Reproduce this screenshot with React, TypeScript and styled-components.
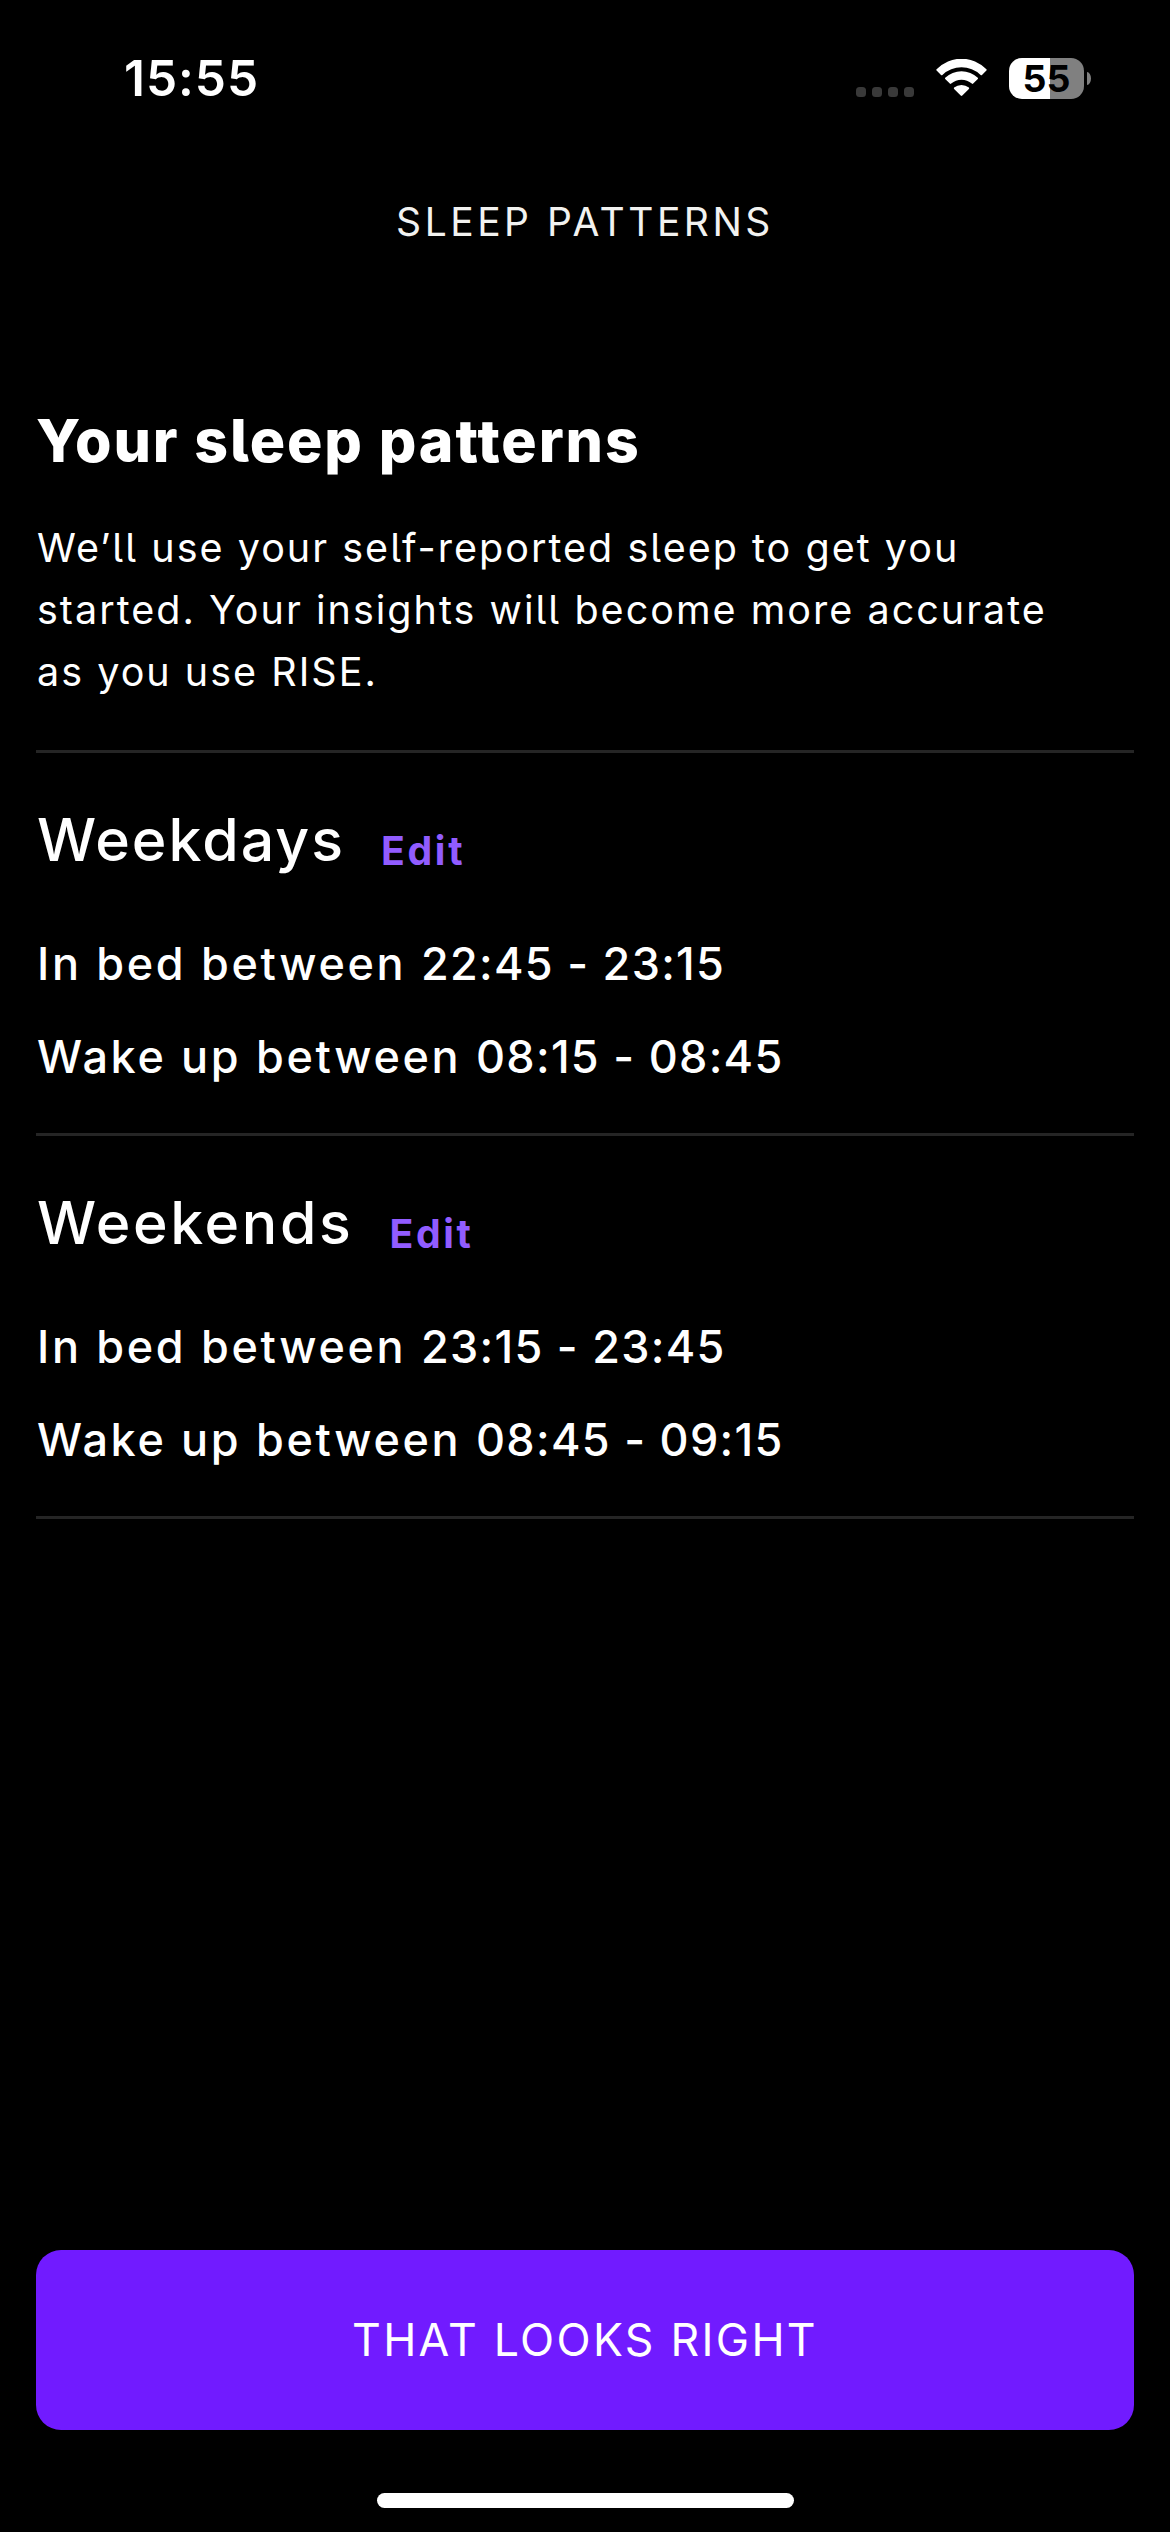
import React from "react";
import styled, { createGlobalStyle } from "styled-components";

const GlobalStyle = createGlobalStyle`
  body {
    margin: 0;
    background: #000;
  }
`;

const Screen = styled.div`
  display: flex;
  flex-direction: column;
  width: 1170px;
  height: 2532px;
  background: #000;
  color: #fff;
  font-family: Inter, "Liberation Sans", sans-serif;
  font-feature-settings: "cv05";
  white-space: nowrap;
`;

const StatusBar = styled.div`
  display: flex;
  align-items: center;
  justify-content: space-between;
  box-sizing: border-box;
  height: 156px;
  padding: 0 79px 0 124px;
`;

const Clock = styled.div`
  font-size: 49.5px;
  font-weight: 570;
  letter-spacing: 1px;
  line-height: 60px;
`;

const Indicators = styled.div`
  display: flex;
  align-items: center;
  gap: 22px;
`;

const SignalDots = styled.div`
  display: flex;
  gap: 6px;
  padding-top: 27px;
`;

const Dot = styled.span`
  width: 10px;
  height: 10px;
  border-radius: 3.5px;
  background: #393939;
`;

const WifiIcon = styled.svg`
  display: block;
  width: 51px;
  height: 38px;
  fill: #fff;
`;

const Battery = styled.div`
  display: flex;
  align-items: center;
  gap: 3px;
`;

const BatteryBody = styled.div<{ $level: number }>`
  display: flex;
  align-items: center;
  justify-content: center;
  width: 75px;
  height: 41px;
  border-radius: 13px;
  background: linear-gradient(
    to right,
    #fff ${(p) => p.$level}%,
    #808080 ${(p) => p.$level}%
  );
  color: #000;
  font-size: 37.5px;
  font-weight: 650;
  line-height: 41px;
`;

const BatteryCap = styled.span`
  width: 4px;
  height: 13px;
  border-radius: 0 4px 4px 0 / 0 6.5px 6.5px 0;
  background: #808080;
`;

const Header = styled.header`
  display: flex;
  align-items: center;
  justify-content: center;
  height: 130px;
  color: #f2f2f0;
  font-size: 39px;
  letter-spacing: 3.5px;
`;

const Main = styled.main`
  flex: 1;
  padding: 120px 36px 0;
`;

const Intro = styled.section`
  padding-bottom: 47px;
  border-bottom: 3px solid #252525;
`;

const Heading = styled.h1`
  margin: 0;
  font-size: 59px;
  font-weight: 800;
  letter-spacing: 1.9px;
  line-height: 70px;
`;

const Lead = styled.p`
  margin: 41px 0 0;
  padding-left: 1px;
  font-size: 39.5px;
  letter-spacing: 2.02px;
  line-height: 62px;
`;

const Schedule = styled.section`
  padding: 52px 0 51px 1px;
  border-bottom: 3px solid #252525;
`;

const TitleRow = styled.div`
  display: flex;
  align-items: flex-end;
  gap: 36px;
  margin-bottom: 64px;
`;

const Title = styled.h2<{ $tracking: number }>`
  margin: 0;
  font-size: 59px;
  font-weight: 500;
  letter-spacing: ${(p) => p.$tracking}px;
  line-height: 70px;
`;

const EditButton = styled.button`
  padding: 0;
  border: 0;
  background: none;
  color: #915cff;
  font: 650 39.2px/48px Inter, "Liberation Sans", sans-serif;
  letter-spacing: 2.7px;
`;

const TimeRow = styled.div`
  font-size: 45px;
  font-weight: 500;
  letter-spacing: 2.65px;
  line-height: 50px;

  & + & {
    margin-top: 43px;
  }
`;

const Times = styled.span`
  letter-spacing: 1.3px;
`;

const ConfirmButton = styled.button`
  height: 180px;
  margin: 0 36px;
  padding: 0;
  border: 0;
  border-radius: 25px;
  background: #711bff;
  color: #fff;
  font: 400 44.6px/60px Inter, "Liberation Sans", sans-serif;
  letter-spacing: 2.31px;
`;

const HomeIndicator = styled.div`
  width: 417px;
  height: 15px;
  margin: 63px auto 24px;
  border-radius: 7.5px;
  background: #fff;
`;

const schedules = [
  { title: "Weekdays", tracking: 2, bed: "22:45 - 23:15", wake: "08:15 - 08:45" },
  { title: "Weekends", tracking: 2.6, bed: "23:15 - 23:45", wake: "08:45 - 09:15" },
];

export default function App() {
  return (
    <Screen>
      <GlobalStyle />
      <StatusBar>
        <Clock>15:55</Clock>
        <Indicators>
          <SignalDots>
            <Dot />
            <Dot />
            <Dot />
            <Dot />
          </SignalDots>
          <WifiIcon viewBox="0 0 51 38">
            <path d="M.6 10.3A34.5 34.5 0 0 1 50.4 10.3Q51 11 50.4 11.6L46 15.9Q45.3 16.5 44.6 15.9A28 28 0 0 0 6.4 15.9Q5.7 16.5 5 15.9L.6 11.6Q0 11 .6 10.3Z" />
            <path d="M9.2 18.8A23.5 23.5 0 0 1 41.8 18.8Q42.4 19.5 41.8 20.1L37.2 24.6Q36.5 25.2 35.8 24.6A15.8 15.8 0 0 0 15.2 24.6Q14.5 25.2 13.8 24.6L9.2 20.1Q8.6 19.5 9.2 18.8Z" />
            <path d="M18.1 28.6A11.6 11.6 0 0 1 32.9 28.6Q33.5 29.3 32.9 29.9L26.3 36.6Q25.5 37.4 24.7 36.6L18.1 29.9Q17.5 29.3 18.1 28.6Z" />
          </WifiIcon>
          <Battery>
            <BatteryBody $level={55}>55</BatteryBody>
            <BatteryCap />
          </Battery>
        </Indicators>
      </StatusBar>
      <Header>SLEEP PATTERNS</Header>
      <Main>
        <Intro>
          <Heading>Your sleep patterns</Heading>
          <Lead>
            We’ll use your self-reported sleep to get you
            <br />
            started. Your insights will become more accurate
            <br />
            as you use RISE.
          </Lead>
        </Intro>
        {schedules.map((s) => (
          <Schedule key={s.title}>
            <TitleRow>
              <Title $tracking={s.tracking}>{s.title}</Title>
              <EditButton>Edit</EditButton>
            </TitleRow>
            <TimeRow>
              In bed between <Times>{s.bed}</Times>
            </TimeRow>
            <TimeRow>
              Wake up between <Times>{s.wake}</Times>
            </TimeRow>
          </Schedule>
        ))}
      </Main>
      <ConfirmButton>THAT LOOKS RIGHT</ConfirmButton>
      <HomeIndicator />
    </Screen>
  );
}
